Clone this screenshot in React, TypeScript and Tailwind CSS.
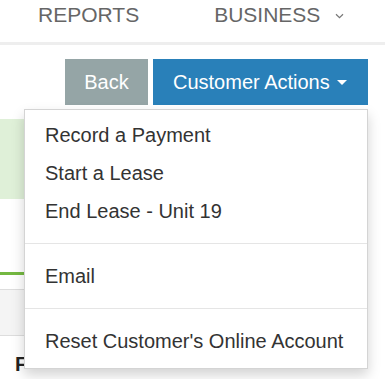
import React from "react";

export default function App() {
  const items1 = ["Record a Payment", "Start a Lease", "End Lease - Unit 19"];
  return (
    <div
      className="relative w-[385px] h-[379px] overflow-hidden bg-white"
      style={{ fontFamily: '"Liberation Sans", Arial, sans-serif' }}
    >
      {/* top nav */}
      <div className="flex h-[42px] items-start pt-[4px] text-[21px] text-[#666] leading-none">
        <span className="ml-[38px]">REPORTS</span>
        <span className="ml-[75px] flex items-center">
          BUSINESS
          <svg className="ml-[15px] mt-[3px]" width="9" height="6" viewBox="0 0 9 6">
            <path d="M1 1.2 L4.5 4.6 L8 1.2" fill="none" stroke="#777" strokeWidth="1.2" />
          </svg>
        </span>
      </div>
      <div className="h-[3px] bg-[#eeeeee]" />

      {/* content */}
      <div className="w-[368px]">
        <div className="mt-[14px] flex justify-end gap-[5px]">
          <button className="h-[46px] w-[83px] bg-[#95a5a6] text-[20px] text-white">Back</button>
          <button className="flex h-[46px] w-[215px] items-center bg-[#2980b9] pl-[20px] text-[20px] text-white">
            <span>Customer Actions</span>
            <svg className="ml-[7px] mt-[1px]" width="10" height="5" viewBox="0 0 10 5">
              <path d="M0 0 L10 0 L5 5 Z" fill="#fff" />
            </svg>
          </button>
        </div>
        <div className="mt-[14px] h-[80px] bg-[#dff0d8]" />
        <div className="mt-[73px] h-[3px] bg-[#74b841]" />
        <div className="mt-[14px] h-[47px] border-y border-[#dddddd] bg-[#f4f4f4]" />
        <div className="mt-[16px] pl-[15px] text-[20px] font-bold leading-[24px] text-[#222]">F</div>
      </div>

      {/* dropdown menu */}
      <div className="absolute left-[24px] top-[109px] w-[344px] border border-[#d4d4d4] bg-white pt-[6px] pb-[8px] shadow-[0_6px_12px_rgba(0,0,0,0.175)]">
        {items1.map((t) => (
          <div key={t} className="flex h-[38px] items-center pl-[20px] text-[20px] text-[#333]">
            {t}
          </div>
        ))}
        <div className="my-[13px] h-px bg-[#e5e5e5]" />
        <div className="flex h-[38px] items-center pl-[20px] text-[20px] text-[#333]">Email</div>
        <div className="my-[13px] h-px bg-[#e5e5e5]" />
        <div className="flex h-[38px] items-center pl-[20px] text-[20px] text-[#333]">
          Reset Customer's Online Account
        </div>
      </div>
    </div>
  );
}
